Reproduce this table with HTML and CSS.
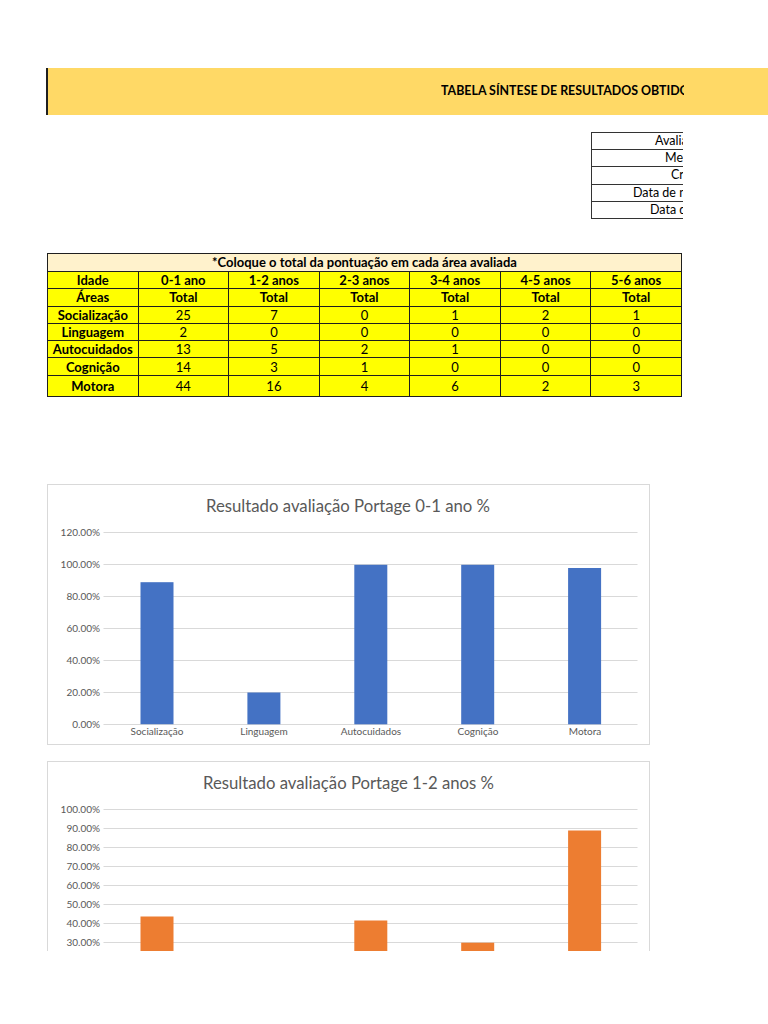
FILE: index.html
```html
<!DOCTYPE html>
<html lang="pt">
<head>
<meta charset="utf-8">
<title>Tabela síntese</title>
<link rel="stylesheet" href="styles.css">
</head>
<body>
<div class="page">
  <div class="band">
    <div class="band-clip">TABELA SÍNTESE DE RESULTADOS OBTIDOS</div>
  </div>

  <div class="info">
    <div class="info-row r1">Avaliador:</div>
    <div class="info-row r2">Mediador:</div>
    <div class="info-row r3">Criança:</div>
    <div class="info-row r4">Data de nascimento:</div>
    <div class="info-row r5">Data da avaliação:</div>
  </div>

  <table class="scores">
    <tr class="note-row"><td class="note" colspan="7">*Coloque o total da pontuação em cada área avaliada</td></tr>
    <tr class="b"><td>Idade</td><td>0-1 ano</td><td>1-2 anos</td><td>2-3 anos</td><td>3-4 anos</td><td>4-5 anos</td><td>5-6 anos</td></tr>
    <tr class="b"><td>Áreas</td><td>Total</td><td>Total</td><td>Total</td><td>Total</td><td>Total</td><td>Total</td></tr>
    <tr><td class="b">Socialização</td><td>25</td><td>7</td><td>0</td><td>1</td><td>2</td><td>1</td></tr>
    <tr><td class="b">Linguagem</td><td>2</td><td>0</td><td>0</td><td>0</td><td>0</td><td>0</td></tr>
    <tr><td class="b">Autocuidados</td><td>13</td><td>5</td><td>2</td><td>1</td><td>0</td><td>0</td></tr>
    <tr><td class="b">Cognição</td><td>14</td><td>3</td><td>1</td><td>0</td><td>0</td><td>0</td></tr>
    <tr class="tall"><td class="b">Motora</td><td>44</td><td>16</td><td>4</td><td>6</td><td>2</td><td>3</td></tr>
  </table>

  <div class="chart c1">
    <svg width="601" height="259" viewBox="1 1 601 259">
      <text class="ttl" x="301" y="28" text-anchor="middle" textLength="284" lengthAdjust="spacingAndGlyphs">Resultado avaliação Portage 0-1 ano %</text>
      <g class="grid">
        <line x1="56.5" x2="590.5" y1="48.5" y2="48.5"/>
        <line x1="56.5" x2="590.5" y1="80.5" y2="80.5"/>
        <line x1="56.5" x2="590.5" y1="112.5" y2="112.5"/>
        <line x1="56.5" x2="590.5" y1="144.5" y2="144.5"/>
        <line x1="56.5" x2="590.5" y1="176.5" y2="176.5"/>
        <line x1="56.5" x2="590.5" y1="208.5" y2="208.5"/>
        <line x1="56.5" x2="590.5" y1="240.5" y2="240.5"/>
      </g>
      <g class="ax" text-anchor="end">
        <text x="53" y="52">120.00%</text>
        <text x="53" y="84">100.00%</text>
        <text x="53" y="116">80.00%</text>
        <text x="53" y="148">60.00%</text>
        <text x="53" y="180">40.00%</text>
        <text x="53" y="212">20.00%</text>
        <text x="53" y="244">0.00%</text>
      </g>
      <g class="bar-blue">
        <rect x="93.5" y="98.2" width="33" height="142"/>
        <rect x="200.4" y="208.5" width="33" height="31.8"/>
        <rect x="307.3" y="80.8" width="33" height="159.5"/>
        <rect x="414.2" y="80.8" width="33" height="159.5"/>
        <rect x="521.1" y="84" width="33" height="156.3"/>
      </g>
      <g class="ax" text-anchor="middle">
        <text x="110" y="251">Socialização</text>
        <text x="217" y="251">Linguagem</text>
        <text x="324" y="251">Autocuidados</text>
        <text x="431" y="251">Cognição</text>
        <text x="538" y="251">Motora</text>
      </g>
    </svg>
  </div>

  <div class="chart c2">
    <svg width="601" height="259" viewBox="1 1 601 259">
      <text class="ttl" x="301.5" y="27.5" text-anchor="middle" textLength="291" lengthAdjust="spacingAndGlyphs">Resultado avaliação Portage 1-2 anos %</text>
      <g class="grid">
        <line x1="56.5" x2="590.5" y1="48.5" y2="48.5"/>
        <line x1="56.5" x2="590.5" y1="67.5" y2="67.5"/>
        <line x1="56.5" x2="590.5" y1="86.5" y2="86.5"/>
        <line x1="56.5" x2="590.5" y1="105.5" y2="105.5"/>
        <line x1="56.5" x2="590.5" y1="124.5" y2="124.5"/>
        <line x1="56.5" x2="590.5" y1="143.5" y2="143.5"/>
        <line x1="56.5" x2="590.5" y1="162.5" y2="162.5"/>
        <line x1="56.5" x2="590.5" y1="181.5" y2="181.5"/>
        <line x1="56.5" x2="590.5" y1="200.5" y2="200.5"/>
        <line x1="56.5" x2="590.5" y1="219.5" y2="219.5"/>
        <line x1="56.5" x2="590.5" y1="239.5" y2="239.5"/>
      </g>
      <g class="ax" text-anchor="end">
        <text x="53" y="52">100.00%</text>
        <text x="53" y="71">90.00%</text>
        <text x="53" y="90">80.00%</text>
        <text x="53" y="109">70.00%</text>
        <text x="53" y="128">60.00%</text>
        <text x="53" y="147">50.00%</text>
        <text x="53" y="166">40.00%</text>
        <text x="53" y="185">30.00%</text>
        <text x="53" y="204">20.00%</text>
        <text x="53" y="223">10.00%</text>
        <text x="53" y="243">0.00%</text>
      </g>
      <g class="bar-orange">
        <rect x="93.5" y="155.5" width="33" height="84"/>
        <rect x="307.3" y="159.5" width="33" height="80"/>
        <rect x="414.2" y="181.7" width="33" height="57.8"/>
        <rect x="521.1" y="69.5" width="33" height="170"/>
      </g>
      <g class="ax" text-anchor="middle">
        <text x="110" y="251">Socialização</text>
        <text x="217" y="251">Linguagem</text>
        <text x="324" y="251">Autocuidados</text>
        <text x="431" y="251">Cognição</text>
        <text x="538" y="251">Motora</text>
      </g>
    </svg>
  </div>
</div>
</body>
</html>
```

FILE: styles.css
```css
html, body {
  margin: 0;
  padding: 0;
  background: #ffffff;
}

body {
  font-family: Lato, "Open Sans", "Liberation Sans", sans-serif;
  color: #000000;
}

.page {
  width: 768px;
  height: 951px;
  overflow: hidden;
  padding-top: 68px;
  box-sizing: border-box;
}

/* Title band */
.band {
  margin-left: 46px;
  height: 47px;
  background: #ffd966;
  border-left: 2px solid #1f1f1f;
  display: flex;
  align-items: center;
  padding-left: 393px;
  padding-bottom: 2px;
  box-sizing: border-box;
}

.band-clip {
  width: 243px;
  overflow: hidden;
  white-space: nowrap;
  font-weight: 700;
  font-size: 12.4px;
}

/* Info box (clipped at the page edge) */
.info {
  margin: 17px 0 0 591px;
  width: 91px;
  border-left: 1px solid #333333;
  border-bottom: 1px solid #333333;
}

.info-row {
  height: 17.2px;
  box-sizing: border-box;
  border-top: 1px solid #333333;
  overflow: hidden;
  white-space: nowrap;
  font-size: 12.5px;
  line-height: 15px;
}

.r1 { padding-left: 63px; }
.r2 { padding-left: 73px; }
.r3 { padding-left: 79px; }
.r4 { padding-left: 41px; }
.r5 { padding-left: 58px; }

/* Scores table */
.scores {
  margin: 34px 0 0 47px;
  border-collapse: collapse;
  width: 635px;
  table-layout: fixed;
  font-size: 13px;
}

.scores td {
  border: 1px solid #1f1f1f;
  background: #ffff00;
  text-align: center;
  padding: 0;
  height: 16.3px;
  line-height: 14px;
  white-space: nowrap;
}

.scores .note {
  background: #fff2cc;
  font-weight: 700;
  height: 17px;
}

.scores .b,
.scores .b td {
  font-weight: 700;
}

.scores .tall td {
  height: 20px;
}

/* Charts */
.chart {
  margin-left: 47px;
  width: 603px;
  height: 261px;
  box-sizing: border-box;
  border: 1px solid #d9d9d9;
  background: #ffffff;
}

.chart svg {
  display: block;
}

.c1 { margin-top: 87px; }
.c2 { margin-top: 16px; }

.ttl {
  font-family: Lato, "Open Sans", sans-serif;
  font-size: 17px;
  fill: #595959;
}

.ax {
  font-family: Lato, "Open Sans", sans-serif;
  font-size: 10px;
  fill: #595959;
}

.grid line {
  stroke: #d9d9d9;
  stroke-width: 1;
}

.bar-blue rect {
  fill: #4472c4;
}

.bar-orange rect {
  fill: #ed7d31;
}
```
